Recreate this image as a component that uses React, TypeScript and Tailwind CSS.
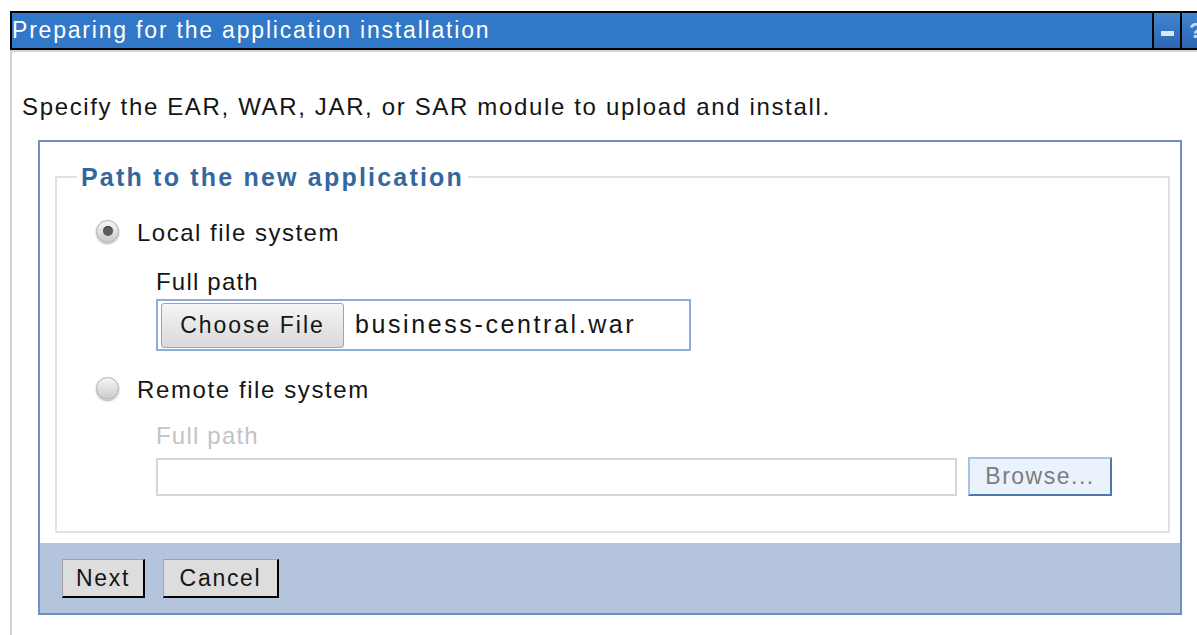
import React from "react";

function Radio({ checked }: { checked?: boolean }) {
  return (
    <span className="flex h-[23px] w-[23px] shrink-0 items-center justify-center rounded-full border border-[#adadad] bg-linear-to-b from-[#f6f6f6] to-[#cbcbcb] shadow-[0_1px_2px_rgba(0,0,0,0.3)]">
      {checked && <span className="h-[10px] w-[10px] rounded-full bg-[#5e5e5e] shadow-[inset_0_1px_1px_rgba(0,0,0,0.4)]" />}
    </span>
  );
}

function OldButton({ label, width }: { label: string; width: string }) {
  return (
    <button
      className={`flex h-[39px] items-center justify-center border-t border-l border-[#a3a3a3] border-r-2 border-b-2 border-r-black border-b-black bg-[#dddddd] text-[23px] tracking-[1.7px] text-[#151515] ${width}`}
    >
      {label}
    </button>
  );
}

export default function App() {
  return (
    <div className="min-h-[635px] overflow-hidden bg-white font-['Liberation_Sans',Arial,sans-serif] text-[#151515]">
      {/* portlet title bar */}
      <div className="pt-[11px] pl-[10px]">
        <div className="flex h-[39px] items-stretch border-y-2 border-l-2 border-black bg-[#3278c8]">
          <div className="flex flex-1 items-center text-[23px] tracking-[1.8px] text-white">
            Preparing for the application installation
          </div>
          <div className="flex w-[28px] items-start justify-center border-l-2 border-black bg-linear-to-b from-[#4185d2] to-[#2a67b1]">
            <span className="mt-[18px] h-[5px] w-[13px] bg-[#dbe6f5]" />
          </div>
          <div className="w-[17px] overflow-hidden border-l-2 border-black bg-linear-to-b from-[#4185d2] to-[#2a67b1] pl-[7px] text-[22px] font-bold leading-[35px] text-[#c9d9ef]">
            ?
          </div>
        </div>
      </div>

      <div className="ml-[10px] min-h-[585px] border-t-2 border-l-2 border-[#d3d3d3]">
        <p className="mt-[41px] pl-[10px] text-[24px] leading-[28px] tracking-[1.65px]">
          Specify the EAR, WAR, JAR, or SAR module to upload and install.
        </p>

        {/* wizard panel */}
        <div className="mt-[19px] ml-[26px] w-[1144px] border-2 border-[#6f90c3] bg-white">
          <fieldset className="mt-[23px] ml-[15px] mr-[10px] border-2 border-[#e1e1e1] pb-[35px]">
            <legend className="ml-[20px] px-[4px] text-[25px] font-bold leading-[24px] tracking-[2.2px] text-[#33679d]">
              Path to the new application
            </legend>

            <label className="mt-[30px] flex h-[28px] items-center pl-[39px]">
              <span className="-mt-[4px]"><Radio checked /></span>
              <span className="ml-[18px] text-[24px] tracking-[1.5px]">Local file system</span>
            </label>
            <div className="mt-[21px] pl-[99px] text-[24px] leading-[28px] tracking-[1.2px]">Full path</div>
            <div className="mt-[3px] ml-[99px] flex h-[52px] w-[535px] items-center border-2 border-[#8aaed8] bg-white pl-[3px]">
              <span className="flex h-[45px] w-[183px] items-center justify-center rounded-[3px] border border-[#a4a4a4] bg-linear-to-b from-[#f5f5f5] to-[#d9d9d9] text-[23px] tracking-[2px]">
                Choose File
              </span>
              <span className="ml-[11px] text-[25px] tracking-[2.6px]">business-central.war</span>
            </div>

            <label className="mt-[25px] flex h-[28px] items-center pl-[39px]">
              <span className="-mt-[4px]"><Radio /></span>
              <span className="ml-[18px] text-[24px] tracking-[1.6px]">Remote file system</span>
            </label>
            <div className="mt-[18px] pl-[99px] text-[24px] leading-[28px] tracking-[1.2px] text-[#c3c3c3]">Full path</div>
            <div className="mt-[7px] ml-[99px] flex items-center">
              <div className="h-[38px] w-[801px] border-2 border-[#d6d6d6] bg-white" />
              <span className="ml-[11px] flex h-[39px] w-[144px] items-center justify-center border-2 border-t-[#a9c3e6] border-l-[#a9c3e6] border-r-[#4f76ad] border-b-[#4f76ad] bg-[#eaf2fd] text-[23px] tracking-[1.5px] text-[#7d7d7d]">
                Browse...
              </span>
            </div>
          </fieldset>

          <div className="mt-[10px] flex h-[70px] items-start gap-[18px] bg-[#b4c4dc] pt-[16px] pl-[22px]">
            <OldButton label="Next" width="w-[83px]" />
            <OldButton label="Cancel" width="w-[116px]" />
          </div>
        </div>
      </div>
    </div>
  );
}
